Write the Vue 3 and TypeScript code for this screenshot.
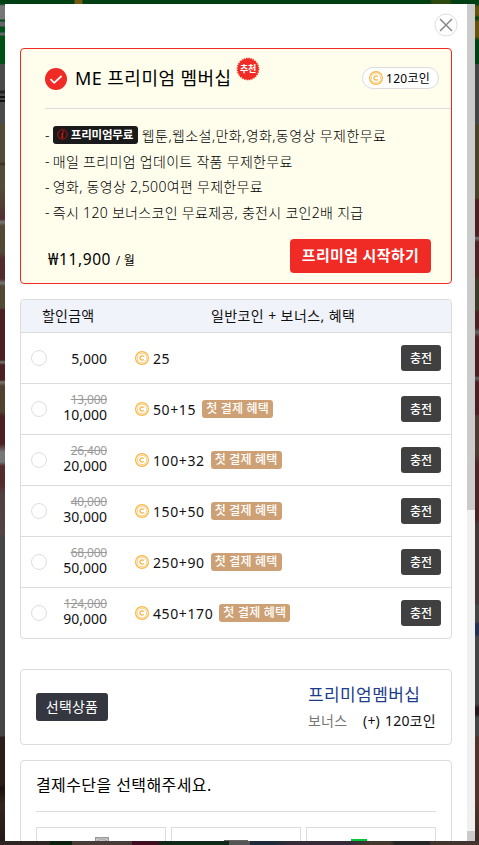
<script setup lang="ts">
interface Plan {
  price: string
  before?: string
  coins: string
}

const plans: Plan[] = [
  { price: '5,000', coins: '25' },
  { price: '10,000', before: '13,000', coins: '50+15' },
  { price: '20,000', before: '26,400', coins: '100+32' },
  { price: '30,000', before: '40,000', coins: '150+50' },
  { price: '50,000', before: '68,000', coins: '250+90' },
  { price: '90,000', before: '124,000', coins: '450+170' },
]
</script>

<template>
  <div class="page">
    <svg width="0" height="0" class="defs">
      <symbol id="coin" viewBox="0 0 14 14">
        <circle cx="7" cy="7" r="6.4" fill="#fff" stroke="#fbb540" stroke-width="1.2" />
        <circle cx="7" cy="7" r="4.7" fill="#fff" stroke="#fcc978" stroke-width=".9" />
        <path d="M8.7 5.7A2.1 2.1 0 1 0 8.7 8.3" fill="none" stroke="#f9b344" stroke-width="1.3" />
      </symbol>
    </svg>
    <div class="strip left"></div>
    <div class="strip right"></div>

    <section class="modal">
      <div class="content">
        <div class="close-row">
          <svg class="close" viewBox="0 0 24 24">
            <circle cx="12" cy="12" r="11" fill="#fff" stroke="#dedede" />
            <path d="M6 6L18 18M18 6L6 18" stroke="#888" stroke-width="1.5" fill="none" />
          </svg>
        </div>

        <article class="premium">
          <header class="premium-head">
            <svg class="check" viewBox="0 0 22 22">
              <circle cx="11" cy="11" r="11" fill="#f02a24" />
              <path d="M5.5 11.2l3.7 3.6 7.4-6.8" fill="none" stroke="#fff" stroke-width="1.7" />
            </svg>
            <h1>ME 프리미엄 멤버십</h1>
            <span class="recommend">
              <svg viewBox="0 0 24 24">
                <circle cx="12" cy="12" r="10.5" fill="#f02a24" />
                <circle cx="12" cy="12" r="10.7" fill="none" stroke="#f02a24" stroke-width="1.2" stroke-dasharray="1.5 .9" />
              </svg>
              <b>추천</b>
            </span>
            <span class="pill"><svg class="coin"><use href="#coin" /></svg>120코인</span>
          </header>
          <ul>
            <li>- <span class="free"><svg viewBox="0 0 12 12"><circle cx="6" cy="6" r="5.2" fill="none" stroke="#d8130f" stroke-width=".9" /><path d="M6.9 2.4L6.6 3.6M4.8 5.1H6.2L5.4 9H6.9" fill="none" stroke="#e8130f" stroke-width="1.4" /></svg>프리미엄무료</span><span class="first">웹툰,웹소설,만화,영화,동영상 무제한무료</span></li>
            <li>- <span>매일 프리미엄 업데이트 작품 무제한무료</span></li>
            <li>- <span>영화, 동영상 2,500여편 무제한무료</span></li>
            <li>- <span>즉시 120 보너스코인 무료제공, 충전시 코인2배 지급</span></li>
          </ul>
          <footer class="premium-foot">
            <p class="monthly">₩11,900 <small>/ 월</small></p>
            <button class="start">프리미엄 시작하기</button>
          </footer>
        </article>

        <div class="table">
          <div class="thead"><span class="th-price">할인금액</span><span class="th-coin">일반코인 + 보너스, 혜택</span></div>
          <div v-for="plan in plans" :key="plan.price" class="row">
            <span class="radio"></span>
            <div class="price" :class="{ discounted: plan.before }">
              <s v-if="plan.before">{{ plan.before }}</s>
              <span>{{ plan.price }}</span>
            </div>
            <svg class="coin"><use href="#coin" /></svg>
            <span class="coins">{{ plan.coins }}</span>
            <span v-if="plan.before" class="benefit">첫 결제 혜택</span>
            <button class="charge">충전</button>
          </div>
        </div>

        <div class="selected">
          <span class="tag">선택상품</span>
          <div class="chosen">
            <strong>프리미엄멤버십</strong>
            <p><span class="bonus">보너스</span><span class="plus">(+)</span><span>120코인</span></p>
          </div>
        </div>

        <div class="payment">
          <h2>결제수단을 선택해주세요.</h2>
          <div class="methods">
            <div class="method"><svg class="card" viewBox="0 0 14 20"><path d="M.7 20V.7H13.3V20" fill="#ddd" stroke="#999" stroke-width="1.4" /><path d="M3 20V3H11V20" fill="#fff" stroke="#888" /></svg></div>
            <div class="method"><span class="phone"></span></div>
            <div class="method"><span class="naver"></span></div>
          </div>
        </div>
      </div>
      <div class="scrollbar"><span class="thumb"></span><span class="corner"></span></div>
    </section>
  </div>
</template>

<style>
body { margin: 0; overflow: hidden; }
</style>

<style scoped>
* { box-sizing: border-box; }
.page {
  position: relative;
  width: 479px;
  height: 845px;
  overflow: hidden;
  padding: 4px 4px 4px 5px;
  background: linear-gradient(90deg, #2e2421 0 50px, #08200d 50px 72px, #493b37 72px 132px, #3f0c20 132px 155px, #102817 163px 229px, #555 229px 250px, #1c2a3a 250px 272px, #352c38 290px 350px, #44382f 370px 390px, #262626 395px 430px, #443430 430px);
  font-family: "Noto Sans", "Noto Sans CJK KR", sans-serif;
  font-size: 14px;
  color: #111;
}
.page::before {
  content: "";
  position: absolute;
  inset: 0 0 auto;
  height: 4px;
  background: linear-gradient(90deg, #003f12 74px, #755812 75px 82px, #003f12 83px 430px, #2e4910 432px 450px, #003f12 452px);
}
.defs { position: absolute; }
.strip { position: absolute; top: 4px; bottom: 4px; width: 5px; }
.left {
  left: 0;
  background: linear-gradient(#00501a 0, #777 2px 15px, #00501a 16px 17px, #666 18px 22px, #00501a 23px 28px, #666 29px 31px, #004f17 32px 60px, #4a4a4a 60px 86px, #222 87px 89px, #4a4a4a 90px 92px, #111 92px 94px, #4a4a4a 94px 96px, #111 96px 98px, #4a4a4a 98px 120px, #514b37 120px 158px, #3a2b1e 160px, #514b37 162px 185px, #532f2f 215px, #777 218px, #514934 222px 248px, #532b2b 255px 275px, #777 279px, #514934 282px 304px, #4c2020 306px 356px, #777 358px, #4c2020 361px 376px, #777 378px, #51412f 382px 408px, #4c2020 412px 440px, #777 448px 458px, #542d2b 462px 480px, #504040 490px, #534343 530px, #454545 532px 732px, #2a1e1b 733px 780px, #171210 784px, #33251e 800px, #241a18);
}
.right {
  right: 0;
  width: 4px;
  background: linear-gradient(#003f12 0, #65530a 3px 11px, #003f12 14px, #65530a 18px 33px, #003f12 36px 60px, #454545 60px 120px, #494128 121px 194px, #4c2023 196px 232px, #777 234px, #4c2222 238px 270px, #3d3b25 278px 306px, #4c2023 308px 324px, #666 328px, #4c2023 333px 372px, #666 374px, #4c2023 378px 410px, #50392e 412px 450px, #4b2325 460px 515px, #423838 520px 600px, #454545 601px 618px, #253050 620px 630px, #454545 633px 700px, #241818 704px 710px, #454545 714px 732px, #503329 733px 800px, #3b2c27);
}
.modal { position: relative; display: flex; height: 837px; background: #fff; overflow: hidden; }
.content { width: 462px; padding: 0 15px; }
.scrollbar { width: 8px; background: #f0f0f0; display: flex; flex-direction: column; justify-content: space-between; }
.thumb { height: 506px; background: #cbcbcb; }
.corner { height: 10px; background: #cbcbcb; }
.close-row { height: 44px; display: flex; justify-content: flex-end; padding: 9px 0 0; }
.close { width: 24px; height: 24px; margin-right: -6px; }
.premium { height: 236px; border: 1px solid #f02a24; border-radius: 4px; background: #fffeec; padding-left: 24px; }
.premium-head { height: 60px; display: flex; align-items: center; border-bottom: 1px solid #dcdce0; }
.check { width: 22px; height: 22px; margin-right: 8px; flex: none; }
h1 { margin: -2px 0 0; font-size: 18px; font-weight: 400; line-height: 24px; letter-spacing: .45px; white-space: nowrap; width: 159px; color: #000; }
.recommend { position: relative; width: 24px; height: 24px; margin: -20px 0 0 2px; display: flex; align-items: center; justify-content: center; }
.recommend svg { position: absolute; inset: 0; width: 24px; height: 24px; }
.recommend b { position: relative; color: #fff; font-size: 9px; line-height: 12px; letter-spacing: -.4px; white-space: nowrap; }
.pill { margin: -2px 12px 0 auto; height: 22px; width: 77px; border: 1px solid #dcdce0; border-radius: 11px; background: #fff; display: flex; align-items: center; padding-left: 6px; font-size: 12px; white-space: nowrap; letter-spacing: .3px; color: #000; }
.coin { width: 14px; height: 14px; flex: none; }
.pill .coin { margin-right: 3px; }
ul { list-style: none; margin: 0; padding: 13px 0 0; }
li { height: 25.7px; display: flex; align-items: center; gap: 3px; white-space: nowrap; font-size: 14px; font-weight: 300; color: #000; letter-spacing: .3px; }
li .first { margin-left: 1px; letter-spacing: .42px; }
.free { height: 18px; width: 85px; background: #1a1a1a; color: #fff; border-radius: 3px; display: flex; align-items: center; padding: 0 0 2px 4px; font-weight: 700; font-size: 11.5px; letter-spacing: -.2px; }
.free svg { width: 11px; height: 11px; margin: 2px 3px 0 0; }
.premium-foot { display: flex; align-items: center; justify-content: space-between; padding: 14px 20px 0 3px; }
.monthly { margin: 9px 0 0; font-size: 15.5px; letter-spacing: .6px; color: #000; line-height: 20px; }
.monthly small { font-size: 12px; letter-spacing: .2px; }
button { border: 0; padding: 0; font-family: inherit; color: #fff; white-space: nowrap; }
.start { width: 141px; height: 34px; padding-bottom: 2px; border-radius: 4px; background: #f02a24; font-size: 15px; font-weight: 700; letter-spacing: .35px; }
.table { margin-top: 15px; border: 1px solid #dcdcdc; border-radius: 4px; overflow: hidden; height: 340px; }
.thead { height: 32px; padding-bottom: 2px; background: #f1f3fb; display: flex; align-items: center; font-size: 14px; color: #111; white-space: nowrap; }
.th-price { width: 190px; padding-left: 21px; letter-spacing: .2px; }
.th-coin { letter-spacing: .4px; }
.row { height: 51px; border-top: 1px solid #dcdcdc; display: flex; align-items: center; padding: 0 10px; color: #111; }
.radio { width: 16px; height: 16px; border: 1px solid #dedede; border-radius: 50%; flex: none; }
.price { width: 60px; text-align: right; font-size: 14px; line-height: 15px; display: flex; flex-direction: column; }
.discounted { padding-bottom: 5px; }
.price s { font-size: 12px; line-height: 15px; letter-spacing: -.2px; color: #999; }
.row > .coin { margin: 0 4px 0 28px; }
.coins { font-size: 14px; letter-spacing: .6px; }
.benefit { margin-left: 6px; width: 71px; height: 18px; border-radius: 3px; background: #cda175; color: #fff; font-size: 12px; font-weight: 500; letter-spacing: .2px; line-height: 18px; text-align: center; white-space: nowrap; }
.charge { margin-left: auto; width: 40px; height: 26px; border-radius: 3px; background: #404040; font-size: 12px; font-weight: 500; }
.selected { margin-top: 30px; height: 76px; border: 1px solid #dcdcdc; border-radius: 4px; padding: 0 15px; display: flex; justify-content: space-between; align-items: center; }
.tag { width: 72px; height: 28px; border-radius: 3px; background: #343640; color: #fff; text-align: center; line-height: 27px; font-size: 14px; letter-spacing: .2px; }
.chosen { width: 128px; padding-top: 1px; white-space: nowrap; }
.chosen strong { display: block; font-weight: 400; font-size: 17px; letter-spacing: .4px; color: #1c3c8c; line-height: 26px; }
.chosen p { margin: 0; display: flex; line-height: 25px; font-size: 14px; letter-spacing: .2px; color: #111; }
.bonus { width: 55px; color: #777; }
.plus { width: 22px; }
.payment { margin-top: 15px; height: 120px; border: 1px solid #dcdcdc; border-radius: 4px; padding: 0 15px; }
h2 { margin: 0; height: 51px; border-bottom: 1px solid #dcdcdc; font-size: 16px; letter-spacing: .4px; line-height: 49px; font-weight: 400; color: #000; white-space: nowrap; }
.methods { margin-top: 15px; display: flex; gap: 5px; }
.method { width: 130px; height: 50px; border: 1px solid #dcdcdc; display: flex; justify-content: center; }
.card { width: 14px; height: 20px; margin: 9px 0 0 1px; }
.phone { width: 24px; height: 20px; margin-top: 12px; background: #666; }
.naver { width: 16px; height: 16px; margin: 11px 24px 0 0; background: #00c83c; }
</style>
